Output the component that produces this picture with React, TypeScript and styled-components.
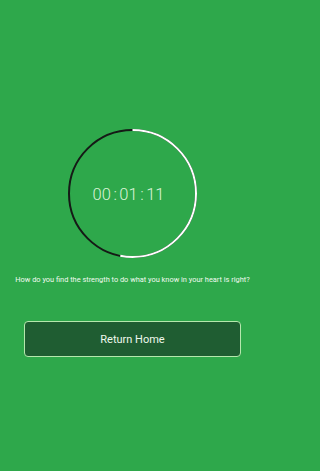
import React from "react";
import styled, { createGlobalStyle } from "styled-components";

const GlobalStyle = createGlobalStyle`
  html, body {
    margin: 0;
    padding: 0;
    background: #2ea84b;
  }
  body {
    font-family: Roboto, "Liberation Sans", sans-serif;
  }
`;

const Screen = styled.div`
  display: flex;
  flex-direction: column;
  align-items: center;
  width: 265px;
  height: 471px;
  background: #2ea84b;
  padding-top: 129px;
  box-sizing: border-box;
`;

const TimerWrap = styled.div`
  position: relative;
  width: 129px;
  height: 129px;
  display: flex;
  align-items: center;
  justify-content: center;
`;

const Ring = styled.svg`
  position: absolute;
  inset: 0;
`;

const TimeText = styled.div`
  position: relative;
  font-family: Roboto, "Liberation Sans", sans-serif;
  font-weight: 300;
  font-size: 16.5px;
  color: #dcf3d8;
  margin-top: 1px;
  margin-left: -8px;
`;

const Colon = styled.span`
  margin: 0 2.5px;
`;

const Question = styled.p`
  margin: 17px 0 0;
  font-size: 7.4px;
  color: #f2fbf0;
  text-align: center;
  white-space: nowrap;
`;

const ReturnButton = styled.button`
  margin-top: 37px;
  width: 217px;
  height: 36px;
  background: #1f5d32;
  border: 1.5px solid #b5e8ad;
  border-radius: 4px;
  color: #eef8ec;
  font-family: Roboto, "Liberation Sans", sans-serif;
  font-size: 11px;
  cursor: pointer;
`;

const ProgressRing: React.FC<{ progress: number }> = ({ progress }) => {
  const size = 129;
  const r = 63.5;
  const c = 2 * Math.PI * r;
  return (
    <Ring width={size} height={size} viewBox={`0 0 ${size} ${size}`}>
      <circle cx={size / 2} cy={size / 2} r={r} fill="none" stroke="#151a16" strokeWidth={2} />
      <circle
        cx={size / 2}
        cy={size / 2}
        r={r}
        fill="none"
        stroke="#ffffff"
        strokeWidth={2}
        strokeDasharray={`${c * progress} ${c}`}
        transform={`rotate(-90 ${size / 2} ${size / 2})`}
      />
    </Ring>
  );
};

const App: React.FC = () => {
  return (
    <>
      <GlobalStyle />
      <Screen>
        <TimerWrap>
          <ProgressRing progress={0.53} />
          <TimeText>
            00<Colon>:</Colon>01<Colon>:</Colon>11
          </TimeText>
        </TimerWrap>
        <Question>How do you find the strength to do what you know in your heart is right?</Question>
        <ReturnButton>Return Home</ReturnButton>
      </Screen>
    </>
  );
};

export default App;
